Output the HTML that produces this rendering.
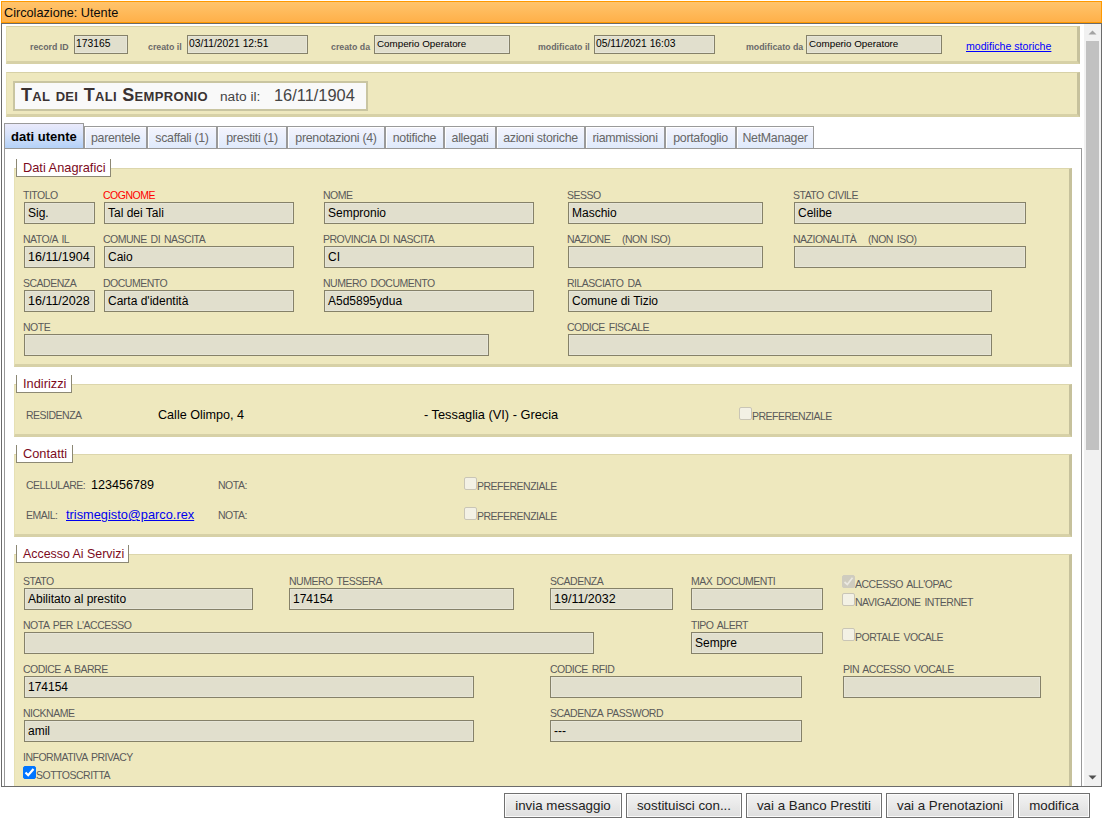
<!DOCTYPE html><html><head><meta charset="utf-8"><style>
*{box-sizing:border-box;margin:0;padding:0}
html,body{width:1104px;height:820px;overflow:hidden;background:#fff;font-family:"Liberation Sans",sans-serif}
div{position:absolute}
.t{white-space:nowrap}
.inp{background:#e1dfcd;border:1px solid #858169;box-shadow:inset 0 0 0 1px #e6e5d7}
.pan{background:#eee8be;border-top:1px solid #d7d1a7;border-left:1px solid #e6e0b4;border-right:3px solid #c6c19c;border-bottom:3px solid #d7d1a7}
.fs{background:#eee8be;border-top:1px solid #dcd6ac;border-left:1px solid #e6e0b4;border-right:3px solid #c6c19c;border-bottom:3px solid #d7d1a7}
.lg{background:#fff;border:1px solid #8c8874;border-top:none}
.tab{border:1px solid #9a9a9a;background:linear-gradient(#f4f4fd,#dfeafb);box-shadow:inset 1px 1px 0 #fff}
.tab.act{background:linear-gradient(#eaeafb 0%,#d6e2fa 45%,#b3d1f8 100%);box-shadow:none}
.cb{width:13px;height:13px;border:1px solid #c9c5b6;border-radius:2px;background:#f3f1e5}
.cb.dis{background:#cfccbf;border-color:#cfccbf}
.cb.on{background:#0075ff;border-color:#0075ff;border-radius:2px}
.btn{border:1px solid #707070;background:linear-gradient(#f3f3f3,#dedede);box-shadow:inset 0 0 0 1px #fbfbfb;font-size:13.333px;color:#222;text-align:center;line-height:23px}
</style></head><body>
<div style="left:1px;top:1px;width:1101px;height:22px;border:1px solid #ff9900;background:linear-gradient(#ffc46c,#ffb049)"></div>
<div class="t " style="left:4px;top:5.70px;font-size:12.7px;line-height:15px;color:#0a0a0a;font-weight:normal;">Circolazione: Utente</div>
<div style="left:1px;top:23px;width:1101px;height:764px;border:1px solid #6b6b6b"></div>
<div class="pan" style="left:6px;top:26px;width:1074px;height:38px;"></div>
<div class="t " style="left:30px;top:41.95px;font-size:8.8px;line-height:10px;color:#6a6a6a;font-weight:bold;">record ID</div>
<div class="t " style="left:148px;top:41.95px;font-size:8.8px;line-height:10px;color:#6a6a6a;font-weight:bold;">creato il</div>
<div class="t " style="left:331px;top:41.95px;font-size:8.8px;line-height:10px;color:#6a6a6a;font-weight:bold;">creato da</div>
<div class="t " style="left:538px;top:41.95px;font-size:8.8px;line-height:10px;color:#6a6a6a;font-weight:bold;">modificato il</div>
<div class="t " style="left:746px;top:41.95px;font-size:8.8px;line-height:10px;color:#6a6a6a;font-weight:bold;">modificato da</div>
<div class="inp" style="left:74px;top:35px;width:54px;height:19px;"></div>
<div class="t " style="left:76px;top:38.43px;font-size:10.3px;line-height:12px;color:#000;font-weight:normal;">173165</div>
<div class="inp" style="left:187px;top:35px;width:121px;height:19px;"></div>
<div class="t " style="left:189px;top:38.43px;font-size:10.3px;line-height:12px;color:#000;font-weight:normal;">03/11/2021 12:51</div>
<div class="inp" style="left:374px;top:35px;width:136px;height:19px;"></div>
<div class="t " style="left:377px;top:38.10px;font-size:9.8px;line-height:11px;color:#000;font-weight:normal;">Comperio Operatore</div>
<div class="inp" style="left:594px;top:35px;width:121px;height:19px;"></div>
<div class="t " style="left:596px;top:38.43px;font-size:10.3px;line-height:12px;color:#000;font-weight:normal;">05/11/2021 16:03</div>
<div class="inp" style="left:806px;top:35px;width:136px;height:19px;"></div>
<div class="t " style="left:809px;top:38.10px;font-size:9.8px;line-height:11px;color:#000;font-weight:normal;">Comperio Operatore</div>
<div class="t " style="left:966px;top:40.33px;font-size:10.6px;line-height:12px;color:#0000ff;font-weight:normal;text-decoration:underline">modifiche storiche</div>
<div class="pan" style="left:6px;top:72px;width:1074px;height:45px;"></div>
<div style="left:13px;top:81px;width:355px;height:30px;border:2px solid #c9c5a1;background:#f9f9f9"></div>
<div class="t" style="left:21px;top:85px;font-size:18px;line-height:20px;letter-spacing:0.33px;font-weight:bold;font-variant:small-caps;color:#3a3232">Tal dei Tali Sempronio</div>
<div class="t " style="left:220px;top:89.25px;font-size:13.7px;line-height:16px;color:#444;font-weight:normal;">nato il:</div>
<div class="t " style="left:274px;top:85.82px;font-size:16.4px;line-height:19px;color:#444;font-weight:normal;">16/11/1904</div>
<div class="tab act" style="left:4px;top:123px;width:80px;height:26px"></div>
<div class="t " style="left:11px;top:129.00px;font-size:13px;line-height:15px;color:#000;font-weight:bold;">dati utente</div>
<div class="tab" style="left:84px;top:126px;width:63px;height:23px"></div>
<div class="t" style="left:84px;width:63px;text-align:center;top:132.00px;font-size:12.4px;line-height:12px;letter-spacing:-0.3px;color:#666">parentele</div>
<div class="tab" style="left:147px;top:126px;width:70px;height:23px"></div>
<div class="t" style="left:147px;width:70px;text-align:center;top:132.00px;font-size:12.4px;line-height:12px;letter-spacing:-0.3px;color:#666">scaffali (1)</div>
<div class="tab" style="left:217px;top:126px;width:70px;height:23px"></div>
<div class="t" style="left:217px;width:70px;text-align:center;top:132.00px;font-size:12.4px;line-height:12px;letter-spacing:-0.3px;color:#666">prestiti (1)</div>
<div class="tab" style="left:287px;top:126px;width:98px;height:23px"></div>
<div class="t" style="left:287px;width:98px;text-align:center;top:132.00px;font-size:12.4px;line-height:12px;letter-spacing:-0.3px;color:#666">prenotazioni (4)</div>
<div class="tab" style="left:385px;top:126px;width:59px;height:23px"></div>
<div class="t" style="left:385px;width:59px;text-align:center;top:132.00px;font-size:12.4px;line-height:12px;letter-spacing:-0.3px;color:#666">notifiche</div>
<div class="tab" style="left:444px;top:126px;width:52px;height:23px"></div>
<div class="t" style="left:444px;width:52px;text-align:center;top:132.00px;font-size:12.4px;line-height:12px;letter-spacing:-0.3px;color:#666">allegati</div>
<div class="tab" style="left:496px;top:126px;width:89px;height:23px"></div>
<div class="t" style="left:496px;width:89px;text-align:center;top:132.00px;font-size:12.4px;line-height:12px;letter-spacing:-0.3px;color:#666">azioni storiche</div>
<div class="tab" style="left:585px;top:126px;width:80px;height:23px"></div>
<div class="t" style="left:585px;width:80px;text-align:center;top:132.00px;font-size:12.4px;line-height:12px;letter-spacing:-0.3px;color:#666">riammissioni</div>
<div class="tab" style="left:665px;top:126px;width:71px;height:23px"></div>
<div class="t" style="left:665px;width:71px;text-align:center;top:132.00px;font-size:12.4px;line-height:12px;letter-spacing:-0.3px;color:#666">portafoglio</div>
<div class="tab" style="left:736px;top:126px;width:78px;height:23px"></div>
<div class="t" style="left:736px;width:78px;text-align:center;top:132.00px;font-size:12.4px;line-height:12px;letter-spacing:-0.3px;color:#666">NetManager</div>
<div style="left:4px;top:148px;width:1078px;height:700px;border:1px solid #999"></div>
<div class="fs" style="left:14px;top:168px;width:1058px;height:199px;"></div>
<div class="lg" style="left:16px;top:159px;width:95px;height:18px;"></div>
<div class="t " style="left:23px;top:160.06px;font-size:12.8px;line-height:15px;color:#7c0a1c;font-weight:normal;">Dati Anagrafici</div>
<div class="t " style="left:23px;top:189.36px;font-size:10.5px;line-height:12px;color:#5a5a5a;font-weight:normal;letter-spacing:-0.5px;word-spacing:1.5px;">TITOLO</div>
<div class="inp" style="left:24px;top:202px;width:71px;height:22px;"></div>
<div class="t " style="left:28px;top:205.84px;font-size:12px;line-height:14px;color:#000;font-weight:normal;">Sig.</div>
<div class="t " style="left:103px;top:189.36px;font-size:10.5px;line-height:12px;color:#5a5a5a;font-weight:normal;letter-spacing:-0.5px;word-spacing:1.5px;"><span style="color:#ff0000">COGNOME</span></div>
<div class="inp" style="left:104px;top:202px;width:190px;height:22px;"></div>
<div class="t " style="left:108px;top:205.84px;font-size:12px;line-height:14px;color:#000;font-weight:normal;">Tal dei Tali</div>
<div class="t " style="left:323px;top:189.36px;font-size:10.5px;line-height:12px;color:#5a5a5a;font-weight:normal;letter-spacing:-0.5px;word-spacing:1.5px;">NOME</div>
<div class="inp" style="left:324px;top:202px;width:210px;height:22px;"></div>
<div class="t " style="left:328px;top:205.84px;font-size:12px;line-height:14px;color:#000;font-weight:normal;">Sempronio</div>
<div class="t " style="left:567px;top:189.36px;font-size:10.5px;line-height:12px;color:#5a5a5a;font-weight:normal;letter-spacing:-0.5px;word-spacing:1.5px;">SESSO</div>
<div class="inp" style="left:568px;top:202px;width:195px;height:22px;"></div>
<div class="t " style="left:572px;top:205.84px;font-size:12px;line-height:14px;color:#000;font-weight:normal;">Maschio</div>
<div class="t " style="left:793px;top:189.36px;font-size:10.5px;line-height:12px;color:#5a5a5a;font-weight:normal;letter-spacing:-0.5px;word-spacing:1.5px;">STATO CIVILE</div>
<div class="inp" style="left:794px;top:202px;width:232px;height:22px;"></div>
<div class="t " style="left:798px;top:205.84px;font-size:12px;line-height:14px;color:#000;font-weight:normal;">Celibe</div>
<div class="t " style="left:23px;top:233.36px;font-size:10.5px;line-height:12px;color:#5a5a5a;font-weight:normal;letter-spacing:-0.5px;word-spacing:1.5px;">NATO/A IL</div>
<div class="inp" style="left:24px;top:246px;width:71px;height:22px;"></div>
<div class="t " style="left:28px;top:249.67px;font-size:12.5px;line-height:14px;color:#000;font-weight:normal;">16/11/1904</div>
<div class="t " style="left:103px;top:233.36px;font-size:10.5px;line-height:12px;color:#5a5a5a;font-weight:normal;letter-spacing:-0.5px;word-spacing:1.5px;">COMUNE DI NASCITA</div>
<div class="inp" style="left:104px;top:246px;width:190px;height:22px;"></div>
<div class="t " style="left:108px;top:249.84px;font-size:12px;line-height:14px;color:#000;font-weight:normal;">Caio</div>
<div class="t " style="left:323px;top:233.36px;font-size:10.5px;line-height:12px;color:#5a5a5a;font-weight:normal;letter-spacing:-0.5px;word-spacing:1.5px;">PROVINCIA DI NASCITA</div>
<div class="inp" style="left:324px;top:246px;width:210px;height:22px;"></div>
<div class="t " style="left:328px;top:249.84px;font-size:12px;line-height:14px;color:#000;font-weight:normal;">CI</div>
<div class="t " style="left:567px;top:233.36px;font-size:10.5px;line-height:12px;color:#5a5a5a;font-weight:normal;letter-spacing:-0.5px;word-spacing:1.5px;">NAZIONE &nbsp; (NON ISO)</div>
<div class="inp" style="left:568px;top:246px;width:195px;height:22px;"></div>
<div class="t " style="left:793px;top:233.36px;font-size:10.5px;line-height:12px;color:#5a5a5a;font-weight:normal;letter-spacing:-0.5px;word-spacing:1.5px;">NAZIONALIT&Agrave; &nbsp; (NON ISO)</div>
<div class="inp" style="left:794px;top:246px;width:232px;height:22px;"></div>
<div class="t " style="left:23px;top:277.36px;font-size:10.5px;line-height:12px;color:#5a5a5a;font-weight:normal;letter-spacing:-0.5px;word-spacing:1.5px;">SCADENZA</div>
<div class="inp" style="left:24px;top:290px;width:71px;height:22px;"></div>
<div class="t " style="left:28px;top:293.67px;font-size:12.5px;line-height:14px;color:#000;font-weight:normal;">16/11/2028</div>
<div class="t " style="left:103px;top:277.36px;font-size:10.5px;line-height:12px;color:#5a5a5a;font-weight:normal;letter-spacing:-0.5px;word-spacing:1.5px;">DOCUMENTO</div>
<div class="inp" style="left:104px;top:290px;width:190px;height:22px;"></div>
<div class="t " style="left:108px;top:293.84px;font-size:12px;line-height:14px;color:#000;font-weight:normal;">Carta d'identit&agrave;</div>
<div class="t " style="left:323px;top:277.36px;font-size:10.5px;line-height:12px;color:#5a5a5a;font-weight:normal;letter-spacing:-0.5px;word-spacing:1.5px;">NUMERO DOCUMENTO</div>
<div class="inp" style="left:324px;top:290px;width:210px;height:22px;"></div>
<div class="t " style="left:328px;top:293.84px;font-size:12px;line-height:14px;color:#000;font-weight:normal;">A5d5895ydua</div>
<div class="t " style="left:567px;top:277.36px;font-size:10.5px;line-height:12px;color:#5a5a5a;font-weight:normal;letter-spacing:-0.5px;word-spacing:1.5px;">RILASCIATO DA</div>
<div class="inp" style="left:568px;top:290px;width:424px;height:22px;"></div>
<div class="t " style="left:572px;top:293.84px;font-size:12px;line-height:14px;color:#000;font-weight:normal;">Comune di Tizio</div>
<div class="t " style="left:23px;top:321.36px;font-size:10.5px;line-height:12px;color:#5a5a5a;font-weight:normal;letter-spacing:-0.5px;word-spacing:1.5px;">NOTE</div>
<div class="inp" style="left:24px;top:334px;width:465px;height:22px;"></div>
<div class="t " style="left:567px;top:321.36px;font-size:10.5px;line-height:12px;color:#5a5a5a;font-weight:normal;letter-spacing:-0.5px;word-spacing:1.5px;">CODICE FISCALE</div>
<div class="inp" style="left:568px;top:334px;width:424px;height:22px;"></div>
<div class="fs" style="left:14px;top:384px;width:1058px;height:53px;"></div>
<div class="lg" style="left:16px;top:375px;width:56px;height:18px;"></div>
<div class="t " style="left:23px;top:376.06px;font-size:12.8px;line-height:15px;color:#7c0a1c;font-weight:normal;">Indirizzi</div>
<div class="t " style="left:26px;top:409.36px;font-size:10.5px;line-height:12px;color:#5a5a5a;font-weight:normal;letter-spacing:-0.5px;word-spacing:1.5px;">RESIDENZA</div>
<div class="t " style="left:158px;top:407.63px;font-size:12.6px;line-height:14px;color:#000;font-weight:normal;">Calle Olimpo, 4</div>
<div class="t " style="left:424px;top:407.06px;font-size:12.8px;line-height:15px;color:#000;font-weight:normal;">- Tessaglia (VI) - Grecia</div>
<div class="cb off" style="left:739px;top:407px"></div>
<div class="t " style="left:752px;top:410.36px;font-size:10.5px;line-height:12px;color:#5a5a5a;font-weight:normal;letter-spacing:-0.5px;word-spacing:1.5px;">PREFERENZIALE</div>
<div class="fs" style="left:14px;top:454px;width:1058px;height:83px;"></div>
<div class="lg" style="left:16px;top:445px;width:57px;height:18px;"></div>
<div class="t " style="left:23px;top:446.06px;font-size:12.8px;line-height:15px;color:#7c0a1c;font-weight:normal;">Contatti</div>
<div class="t " style="left:26px;top:479.36px;font-size:10.5px;line-height:12px;color:#5a5a5a;font-weight:normal;letter-spacing:-0.5px;word-spacing:1.5px;">CELLULARE:</div>
<div class="t " style="left:91px;top:477.63px;font-size:12.6px;line-height:14px;color:#000;font-weight:normal;">123456789</div>
<div class="t " style="left:218px;top:479.36px;font-size:10.5px;line-height:12px;color:#5a5a5a;font-weight:normal;letter-spacing:-0.5px;word-spacing:1.5px;">NOTA:</div>
<div class="cb off" style="left:464px;top:477px"></div>
<div class="t " style="left:477px;top:480.36px;font-size:10.5px;line-height:12px;color:#5a5a5a;font-weight:normal;letter-spacing:-0.5px;word-spacing:1.5px;">PREFERENZIALE</div>
<div class="t " style="left:26px;top:509.36px;font-size:10.5px;line-height:12px;color:#5a5a5a;font-weight:normal;letter-spacing:-0.5px;word-spacing:1.5px;">EMAIL:</div>
<div class="t " style="left:66px;top:507.06px;font-size:12.8px;line-height:15px;color:#0000ee;font-weight:normal;text-decoration:underline">trismegisto@parco.rex</div>
<div class="t " style="left:218px;top:509.36px;font-size:10.5px;line-height:12px;color:#5a5a5a;font-weight:normal;letter-spacing:-0.5px;word-spacing:1.5px;">NOTA:</div>
<div class="cb off" style="left:464px;top:507px"></div>
<div class="t " style="left:477px;top:510.36px;font-size:10.5px;line-height:12px;color:#5a5a5a;font-weight:normal;letter-spacing:-0.5px;word-spacing:1.5px;">PREFERENZIALE</div>
<div class="fs" style="left:14px;top:554px;width:1058px;height:347px;"></div>
<div class="lg" style="left:16px;top:545px;width:113px;height:18px;"></div>
<div class="t " style="left:23px;top:546.70px;font-size:12.4px;line-height:14px;color:#7c0a1c;font-weight:normal;">Accesso Ai Servizi</div>
<div class="t " style="left:23px;top:575.36px;font-size:10.5px;line-height:12px;color:#5a5a5a;font-weight:normal;letter-spacing:-0.5px;word-spacing:1.5px;">STATO</div>
<div class="inp" style="left:24px;top:588px;width:229px;height:22px;"></div>
<div class="t " style="left:28px;top:591.84px;font-size:12px;line-height:14px;color:#000;font-weight:normal;">Abilitato al prestito</div>
<div class="t " style="left:289px;top:575.36px;font-size:10.5px;line-height:12px;color:#5a5a5a;font-weight:normal;letter-spacing:-0.5px;word-spacing:1.5px;">NUMERO TESSERA</div>
<div class="inp" style="left:289px;top:588px;width:225px;height:22px;"></div>
<div class="t " style="left:293px;top:591.84px;font-size:12px;line-height:14px;color:#000;font-weight:normal;">174154</div>
<div class="t " style="left:550px;top:575.36px;font-size:10.5px;line-height:12px;color:#5a5a5a;font-weight:normal;letter-spacing:-0.5px;word-spacing:1.5px;">SCADENZA</div>
<div class="inp" style="left:550px;top:588px;width:123px;height:22px;"></div>
<div class="t " style="left:554px;top:591.67px;font-size:12.5px;line-height:14px;color:#000;font-weight:normal;">19/11/2032</div>
<div class="t " style="left:691px;top:575.36px;font-size:10.5px;line-height:12px;color:#5a5a5a;font-weight:normal;letter-spacing:-0.5px;word-spacing:1.5px;">MAX DOCUMENTI</div>
<div class="inp" style="left:691px;top:588px;width:132px;height:22px;"></div>
<div class="t " style="left:23px;top:619.36px;font-size:10.5px;line-height:12px;color:#5a5a5a;font-weight:normal;letter-spacing:-0.5px;word-spacing:1.5px;">NOTA PER L'ACCESSO</div>
<div class="inp" style="left:24px;top:632px;width:570px;height:22px;"></div>
<div class="t " style="left:691px;top:619.36px;font-size:10.5px;line-height:12px;color:#5a5a5a;font-weight:normal;letter-spacing:-0.5px;word-spacing:1.5px;">TIPO ALERT</div>
<div class="inp" style="left:691px;top:632px;width:132px;height:22px;"></div>
<div class="t " style="left:695px;top:635.84px;font-size:12px;line-height:14px;color:#000;font-weight:normal;">Sempre</div>
<div class="t " style="left:23px;top:663.36px;font-size:10.5px;line-height:12px;color:#5a5a5a;font-weight:normal;letter-spacing:-0.5px;word-spacing:1.5px;">CODICE A BARRE</div>
<div class="inp" style="left:24px;top:676px;width:450px;height:22px;"></div>
<div class="t " style="left:28px;top:679.84px;font-size:12px;line-height:14px;color:#000;font-weight:normal;">174154</div>
<div class="t " style="left:550px;top:663.36px;font-size:10.5px;line-height:12px;color:#5a5a5a;font-weight:normal;letter-spacing:-0.5px;word-spacing:1.5px;">CODICE RFID</div>
<div class="inp" style="left:550px;top:676px;width:252px;height:22px;"></div>
<div class="t " style="left:843px;top:663.36px;font-size:10.5px;line-height:12px;color:#5a5a5a;font-weight:normal;letter-spacing:-0.5px;word-spacing:1.5px;">PIN ACCESSO VOCALE</div>
<div class="inp" style="left:843px;top:676px;width:198px;height:22px;"></div>
<div class="t " style="left:23px;top:707.36px;font-size:10.5px;line-height:12px;color:#5a5a5a;font-weight:normal;letter-spacing:-0.5px;word-spacing:1.5px;">NICKNAME</div>
<div class="inp" style="left:24px;top:720px;width:450px;height:22px;"></div>
<div class="t " style="left:28px;top:723.84px;font-size:12px;line-height:14px;color:#000;font-weight:normal;">amil</div>
<div class="t " style="left:550px;top:707.36px;font-size:10.5px;line-height:12px;color:#5a5a5a;font-weight:normal;letter-spacing:-0.5px;word-spacing:1.5px;">SCADENZA PASSWORD</div>
<div class="inp" style="left:550px;top:720px;width:252px;height:22px;"></div>
<div class="t " style="left:554px;top:723.84px;font-size:12px;line-height:14px;color:#000;font-weight:normal;">---</div>
<div class="cb dis" style="left:842px;top:575px"></div>
<svg style="position:absolute;left:842px;top:575px" width="13" height="13"><path d="M2.5 7 L5.3 9.5 L10.5 2.8" stroke="#ebe9e1" stroke-width="1.7" fill="none"/></svg>
<div class="t " style="left:855px;top:578.36px;font-size:10.5px;line-height:12px;color:#5a5a5a;font-weight:normal;letter-spacing:-0.5px;word-spacing:1.5px;">ACCESSO ALL'OPAC</div>
<div class="cb off" style="left:842px;top:593px"></div>
<div class="t " style="left:855px;top:596.36px;font-size:10.5px;line-height:12px;color:#5a5a5a;font-weight:normal;letter-spacing:-0.5px;word-spacing:1.5px;">NAVIGAZIONE INTERNET</div>
<div class="cb off" style="left:842px;top:628px"></div>
<div class="t " style="left:855px;top:631.36px;font-size:10.5px;line-height:12px;color:#5a5a5a;font-weight:normal;letter-spacing:-0.5px;word-spacing:1.5px;">PORTALE VOCALE</div>
<div class="t " style="left:23px;top:751.36px;font-size:10.5px;line-height:12px;color:#5a5a5a;font-weight:normal;letter-spacing:-0.5px;word-spacing:1.5px;">INFORMATIVA PRIVACY</div>
<div class="cb on" style="left:23px;top:766px"></div>
<svg style="position:absolute;left:23px;top:766px" width="13" height="13"><path d="M2.5 6.5 L5.2 9.2 L10.5 3" stroke="#fff" stroke-width="2.2" fill="none"/></svg>
<div class="t " style="left:36px;top:769.36px;font-size:10.5px;line-height:12px;color:#5a5a5a;font-weight:normal;letter-spacing:-0.5px;word-spacing:1.5px;">SOTTOSCRITTA</div>
<div style="left:0;top:787px;width:1104px;height:33px;background:#fff"></div>
<div style="left:1px;top:786px;width:1101px;height:1px;background:#6b6b6b"></div>
<div style="left:1084px;top:24px;width:17px;height:762px;background:#f1f1f1"></div>
<div style="left:1086px;top:41px;width:13px;height:409px;background:#c1c1c1"></div>
<svg style="position:absolute;left:1084px;top:24px" width="17" height="17"><path d="M4.5 10.5 L8.5 6.5 L12.5 10.5 Z" fill="#a3a3a3"/></svg>
<svg style="position:absolute;left:1084px;top:769px" width="17" height="17"><path d="M4.5 6.5 L8.5 10.5 L12.5 6.5 Z" fill="#505050"/></svg>
<div class="btn" style="left:504px;top:793px;width:118px;height:25px">invia messaggio</div>
<div class="btn" style="left:626px;top:793px;width:116px;height:25px">sostituisci con...</div>
<div class="btn" style="left:746px;top:793px;width:136px;height:25px">vai a Banco Prestiti</div>
<div class="btn" style="left:886px;top:793px;width:128px;height:25px">vai a Prenotazioni</div>
<div class="btn" style="left:1018px;top:793px;width:72px;height:25px">modifica</div>
</body></html>
